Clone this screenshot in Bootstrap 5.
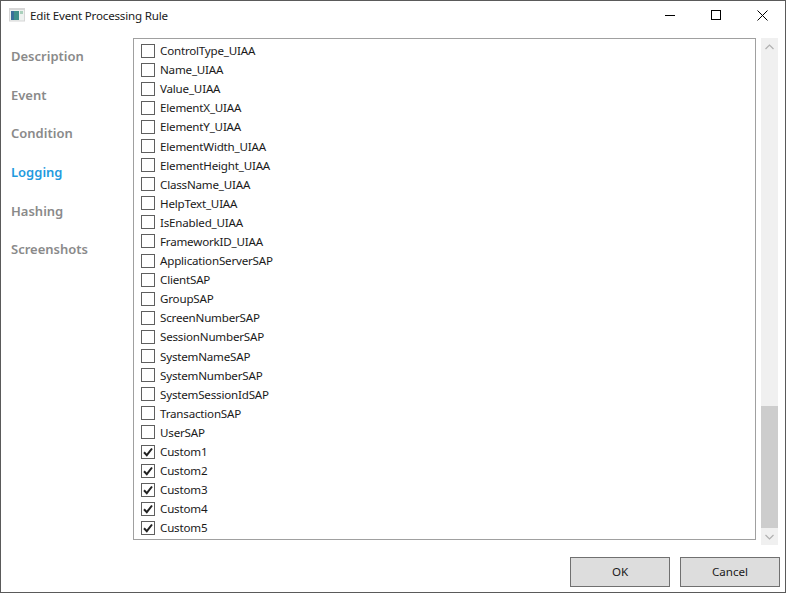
<!DOCTYPE html>
<html lang="en"><head><meta charset="utf-8">
<link href="https://cdn.jsdelivr.net/npm/bootstrap@5.3.0/dist/css/bootstrap.min.css" rel="stylesheet">
<style>
html,body{margin:0;height:593px;overflow:hidden;background:#fff}
body{font-family:"Noto Sans","Open Sans","Liberation Sans",sans-serif;font-size:11.6px;letter-spacing:-.2px;color:#1a1a1a}
.win{width:786px;height:593px;border:1px solid #5a5a5a;background:#fff}
.tbar{height:37px;padding-left:8px}
.tic{margin-top:6px}
.ttl{margin-left:5px;font-size:11.6px;line-height:16px;margin-top:7px}
.wb{width:46px;height:28px}
.side{width:132px;margin-top:-1px}
.side a{display:block;height:38.7px;line-height:38px;padding-left:10px;font-size:13px;letter-spacing:0;font-weight:600;color:#8a8a8a;text-decoration:none}
.side a.on{color:#1f9ade}
.panel{width:623px;height:502px;border:1px solid #a0a0a0;padding-top:2px;overflow:hidden}
.rw{height:19.1px;padding-left:7px;line-height:19px}
.bx{width:14px;height:14px;border:1px solid #5f5f5f;background:#fff;margin-right:5px;flex:none}
.sb{width:17px;height:507px;background:#f0f0f0;margin-left:5px}
.thumb{height:122px;background:#cdcdcd}
.sp{flex:1 1 auto}
.arr{height:17px}
.fbar{padding:12px 5px 0 0;gap:10px}
.wbtn{width:100px;height:30px;background:#dddddd;border:1px solid #707070;font-size:11.6px;color:#1a1a1a;border-radius:0;padding:0}
</style></head><body>
<div class="win d-flex flex-column">
  <div class="tbar d-flex align-items-start">
    <svg class="tic" width="16" height="16" viewBox="0 0 16 16"><rect x="0" y="1" width="16" height="13.5" fill="#d6d6d6"/><rect x="1" y="3" width="14" height="10.5" fill="#eef2f0"/><rect x="2" y="4" width="8" height="9" fill="#3f8f8a"/><rect x="2" y="4" width="3" height="9" fill="#3a6f9a"/><rect x="11" y="4" width="3" height="3" fill="#a9d0bb"/></svg>
    <span class="ttl flex-grow-1">Edit Event Processing Rule</span>
    <div class="wb d-flex align-items-center justify-content-center"><svg width="11" height="11" viewBox="0 0 11 11"><path d="M0 5.5h10" stroke="#000" fill="none"/></svg></div>
    <div class="wb d-flex align-items-center justify-content-center"><svg width="11" height="11" viewBox="0 0 11 11"><rect x=".5" y=".5" width="9" height="9" stroke="#000" fill="none"/></svg></div>
    <div class="wb d-flex align-items-center justify-content-center"><svg width="11" height="11" viewBox="0 0 11 11"><path d="M.5.5l10 10M10.5.5l-10 10" stroke="#000" fill="none"/></svg></div>
  </div>
  <div class="d-flex">
    <nav class="side">
      <a href="#">Description</a><a href="#">Event</a><a href="#">Condition</a><a href="#" class="on">Logging</a><a href="#">Hashing</a><a href="#">Screenshots</a>
    </nav>
    <div class="panel" id="p"></div>
    <div class="sb d-flex flex-column align-items-stretch">
      <div class="arr d-flex align-items-center justify-content-center"><svg width="9" height="6" viewBox="0 0 9 6"><path d="M.5 5l4-4 4 4" stroke="#b0b0b0" stroke-width="1.2" fill="none"/></svg></div>
      <div class="sp"></div>
      <div class="thumb"></div>
      <div class="arr d-flex align-items-center justify-content-center"><svg width="9" height="6" viewBox="0 0 9 6"><path d="M.5 1l4 4 4-4" stroke="#b0b0b0" stroke-width="1.2" fill="none"/></svg></div>
    </div>
  </div>
  <div class="fbar d-flex justify-content-end">
    <button class="wbtn btn">OK</button><button class="wbtn btn">Cancel</button>
  </div>
</div>
<script>
var n=["ControlType_UIAA","Name_UIAA","Value_UIAA","ElementX_UIAA","ElementY_UIAA","ElementWidth_UIAA","ElementHeight_UIAA","ClassName_UIAA","HelpText_UIAA","IsEnabled_UIAA","FrameworkID_UIAA","ApplicationServerSAP","ClientSAP","GroupSAP","ScreenNumberSAP","SessionNumberSAP","SystemNameSAP","SystemNumberSAP","SystemSessionIdSAP","TransactionSAP","UserSAP","Custom1","Custom2","Custom3","Custom4","Custom5"];
document.getElementById('p').innerHTML=n.map(function(t){var c=t.indexOf('Custom')===0;
return '<div class="rw d-flex align-items-center"><span class="bx d-flex align-items-center justify-content-center">'+(c?'<svg width="12" height="12" viewBox="0 0 12 12"><path d="M2 6.2l2.8 3L10 2.5" stroke="#222" stroke-width="2" fill="none"/></svg>':'')+'</span><span>'+t+'</span></div>'}).join('');
</script>
<script src="https://cdn.jsdelivr.net/npm/bootstrap@5.3.0/dist/js/bootstrap.bundle.min.js"></script>
</body></html>
